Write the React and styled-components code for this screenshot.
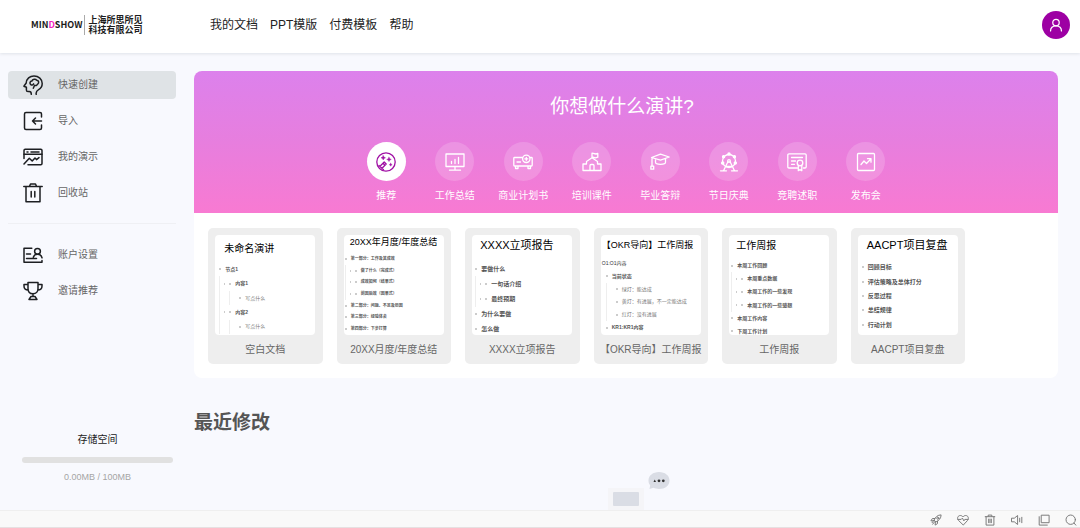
import React from "react";
import styled, { createGlobalStyle } from "styled-components";

const GlobalStyle = createGlobalStyle`
  *, *::before, *::after { box-sizing: border-box; }
  body {
    margin: 0;
    background: #f8f9fe;
    color: #222;
    font-family: "Liberation Sans", "Noto Sans CJK SC", sans-serif;
    font-size: 10px;
  }
  button { font: inherit; border: 0; padding: 0; background: none; cursor: pointer; }
  a { color: inherit; text-decoration: none; }
  ul { list-style: none; margin: 0; padding: 0; }
  h1, h2, h3, p { margin: 0; }
  svg { display: block; }
`;

/* ---------- page frame ---------- */

const Page = styled.div`
  position: relative;
  display: flex;
  flex-direction: column;
  min-height: 100vh;
`;

const Header = styled.header`
  display: flex;
  align-items: center;
  height: 53px;
  padding: 0 10px 4px 31px;
  background: #fff;
  box-shadow: 0 1px 3px #dfe2e8;
`;

const Logo = styled.a`
  display: flex;
  align-items: center;
  width: 179px;
  color: #1c1c1c;
  font-family: "Noto Sans CJK SC", sans-serif;
  font-weight: 700;
  font-size: 9px;
  line-height: 10px;
`;

const LogoAccent = styled.span`
  color: #f21fc0;
`;

const LogoCompany = styled.span`
  margin-left: 2px;
  padding-left: 3px;
  border-left: 1px solid #aaa;
`;

const TopNav = styled.nav`
  display: flex;
  gap: 12px;
  flex: 1;
  font-size: 12px;
  line-height: 18px;
  color: #222;
`;

const Avatar = styled.button`
  display: grid;
  place-items: center;
  width: 28px;
  height: 28px;
  border-radius: 50%;
  background: #9d00a3;
  color: #fff;
`;

const Body = styled.div`
  display: flex;
  flex: 1;
  gap: 18px;
  padding: 18px 22px 0 8px;
`;

/* ---------- sidebar ---------- */

const Sidebar = styled.aside`
  display: flex;
  flex-direction: column;
  flex: 0 0 168px;
`;

const SideList = styled.ul`
  display: flex;
  flex-direction: column;
  gap: 8px;
`;

const SideItem = styled.button`
  display: flex;
  align-items: center;
  gap: 15px;
  width: 100%;
  height: 28px;
  padding-left: 15px;
  border-radius: 4px;
  color: #666;
  line-height: 14px;
  background: ${(p) => (p.$active ? "#dfe3e6" : "transparent")};

  svg { color: #1d1f22; }
`;

const SideDivider = styled.hr`
  width: 100%;
  height: 1px;
  margin: 16px 0 17px;
  border: 0;
  background: #eff0f4;
`;

const Storage = styled.section`
  display: flex;
  flex-direction: column;
  align-items: center;
  margin: auto 3px 28px 14px;
`;

const StorageLabel = styled.label`
  color: #222;
  line-height: 14px;
`;

const StorageBar = styled.progress`
  appearance: none;
  width: 100%;
  height: 6px;
  margin: 10px 0 9px;
  border: 0;
  border-radius: 3px;
  overflow: hidden;
  background: #e1e1e1;

  &::-webkit-progress-bar { background: #e1e1e1; }
  &::-webkit-progress-value { background: #9d00a3; }
`;

const StorageText = styled.p`
  color: #a5a5a5;
  font-size: 9px;
  line-height: 10px;
`;

/* ---------- main column ---------- */

const Main = styled.main`
  flex: 1;
  min-width: 0;
`;

const Panel = styled.section`
  overflow: hidden;
  border-radius: 8px;
  background: #fff;
`;

const Hero = styled.div`
  display: flex;
  flex-direction: column;
  align-items: center;
  padding: 22px 0 10px;
  background: linear-gradient(#dc81ec, #e77ede 50%, #f87ad2);
  color: #fff;
`;

const HeroTitle = styled.h1`
  margin-bottom: 21px;
  padding-right: 8px;
  font-size: 19px;
  font-weight: 400;
  line-height: 28px;
`;

const Categories = styled.div`
  display: grid;
  grid-template-columns: repeat(8, 1fr);
  width: 548px;
  max-width: 100%;
`;

const Category = styled.button`
  display: flex;
  flex-direction: column;
  align-items: center;
  gap: 8px;
  color: #fff;
  line-height: 14px;
  white-space: nowrap;
`;

const CategoryDisc = styled.span`
  display: grid;
  place-items: center;
  width: 39px;
  height: 39px;
  border-radius: 50%;
  background: ${(p) => (p.$active ? "#fff" : "rgba(255, 255, 255, 0.17)")};
  color: ${(p) => (p.$active ? "#a010a4" : "#fff")};
`;

const Templates = styled.div`
  display: grid;
  grid-template-columns: repeat(6, 1fr);
  gap: 14px;
  max-width: 785px;
  padding: 15px 14px 14px;
`;

const Card = styled.button`
  display: flex;
  flex-direction: column;
  align-items: center;
  height: 136px;
  padding: 7px 0;
  border-radius: 5px;
  background: #eee;
  color: #666;
  white-space: nowrap;
`;

const CardCaption = styled.span`
  margin-top: 8px;
  line-height: 14px;
`;

const Preview = styled.span`
  display: block;
  width: 100px;
  height: 100px;
  padding-top: ${(p) => p.$top}px;
  border-radius: 4px;
  overflow: hidden;
  background: #fff;
  color: #333;
  text-align: left;
`;

const PreviewTitle = styled.span`
  display: block;
  margin-bottom: ${(p) => p.$gap}px;
  padding-left: ${(p) => p.$indent}px;
  font-size: ${(p) => p.$size}px;
  font-weight: 400;
  line-height: 14px;
  color: #000;
`;

const Outline = styled.span`
  display: flex;
  flex-direction: column;
  height: ${(p) => p.$height}px;
  padding-left: ${(p) => p.$indent}px;
  font-size: ${(p) => p.$size}px;
`;

const OutlineLine = styled.span`
  display: flex;
  flex: 1;
`;

const Rail = styled.span`
  display: flex;
  align-items: center;
  justify-content: center;
  width: 10px;
  align-self: stretch;
  border-left: 1px solid #eee;
`;

const FoldMark = styled.span`
  width: 1px;
  height: 2px;
  background: #ccc;
`;

const OutlineRow = styled.span`
  display: flex;
  flex: 1;
  align-items: center;
  line-height: 1;
  font-weight: ${(p) => (p.$level === 2 ? 400 : 700)};
  color: ${(p) => (p.$level === 2 ? "#777" : "#555")};

  &::before {
    content: "";
    flex: none;
    width: 2px;
    height: 2px;
    margin-right: 4px;
    border-radius: 50%;
    background: #bbb;
  }
`;

const PlainRow = styled.span`
  display: flex;
  align-items: center;
  line-height: 1;
  color: #333;
`;

const RootSpace = styled.span`
  width: 4px;
`;

const SectionTitle = styled.h2`
  margin-top: 31px;
  color: #555;
  font-size: 19px;
  font-weight: 700;
  line-height: 28px;
`;

/* ---------- bottom strip and floating helper ---------- */

const StatusBar = styled.footer`
  display: flex;
  align-items: center;
  justify-content: flex-end;
  gap: 15px;
  height: 18px;
  padding: 1px 3px 0 0;
  border-top: 1px solid #efefef;
  border-bottom: 1px solid #e6e0e1;
  background: #f9f9f9;
  color: #777;
`;

const StatusButton = styled.button`
  color: inherit;
`;

const Helper = styled.div`
  position: absolute;
  bottom: 18px;
  left: 56%;
  display: flex;
  align-items: flex-end;
  gap: 4px;
  margin-left: 3px;
`;

const HelperBox = styled.div`
  padding: 4px 5px;
  background: #f5f5f8;

  &::before {
    content: "";
    display: block;
    width: 26px;
    height: 14px;
    border-radius: 1px;
    background: #dadde5;
  }
`;

const HelperBubble = styled.button`
  margin-bottom: 20px;
`;

/* ---------- icons ---------- */

const Svg = ({ size = 20, box = 20, sw = 1.5, children }) => (
  <svg
    width={size}
    height={size}
    viewBox={`0 0 ${box} ${box}`}
    fill="none"
    stroke="currentColor"
    strokeWidth={sw}
    strokeLinecap="round"
    strokeLinejoin="round"
    aria-hidden="true"
  >
    {children}
  </svg>
);

const icons = {
  head: (
    <>
      <path d="M8.300 19.300C8.300 17.500 7.800 16.600 6.300 16.600H5Q3.400 16.600 3.400 15V12.200L.9 11.200 3.200 8C3.400 3.800 6.800.9 11 .9 15.600.9 19.200 4.200 19.200 8.400 19.200 11.600 17.600 13.500 15.600 14.600 13.600 15.700 12.800 17 13.200 19.300" />
      <path d="M8 9.800C6.200 8.600 6.900 6 8.900 6 9.500 3.900 12.600 3.500 13.600 5.200 15.800 5.300 16.400 8 14.700 9.100 14.200 10.500 12.500 10.800 11.600 10.300L10.300 13.300M8 9.800C9.200 10.400 10.200 9.800 10.600 8.900" />
    </>
  ),
  importIn: (
    <>
      <path d="M18.500 6V3Q18.500 1.500 17 1.500H3Q1.500 1.500 1.500 3V17Q1.500 18.500 3 18.500H17Q18.500 18.500 18.500 17V14" />
      <path d="M18.500 10H9.500M12.500 7 9.500 10 12.500 13" />
    </>
  ),
  slides: (
    <>
      <path d="M1 11.500V3.500Q1 2.300 2.200 2.300H17.800Q19 2.300 19 3.500V16.500Q19 17.700 17.800 17.700H5" />
      <path d="M1 7.300H19M4 4.900H5M8 4.900H16M1 17 6.300 11.200 9.200 14 12 11 13.500 12.600 16 10.600" />
    </>
  ),
  trash: (
    <path d="M.8 3.500H19.200M6.500 3.300 7.500 1H12.500L13.500 3.300M3 3.700V18.800H17V3.700M8.200 8.500V14M11.800 8.500V14" />
  ),
  account: (
    <>
      <path d="M8.800 3.200H1V17.300H19V15.500M3.500 13.500H13.500M3.500 8.900H7.500" />
      <circle cx="14.500" cy="6.300" r="2.900" />
      <path d="M10.300 12.200C11 10 12.600 9.300 14.500 9.300S18.300 10 19 12.800" />
    </>
  ),
  trophy: (
    <path d="M5 1.500H15V7.500C15 10.700 13.200 12.800 10 12.800S5 10.700 5 7.500ZM5 3.500H1V5C1 7.500 2.800 9 5.200 9M15 3.500H19V5C19 7.500 17.200 9 14.800 9M10 12.800V15.500M8 15.500H12L14 18.500H6Z" />
  ),
  spark: (
    <>
      <circle cx="10" cy="10" r="9.200" />
      <path d="M4 14.200 8.200 10 10.200 12 6 16.200M7 11.200 9 13.200M3 13.500 7.500 17.800" />
      <path d="M7.200 3.600 8 5.100 9.500 5.800 8 6.500 7.200 8 6.500 6.500 5 5.800 6.500 5.100ZM13 5.200 13.800 6.700 15.300 7.400 13.800 8.100 13 9.600 12.200 8.100 10.700 7.400 12.200 6.700ZM14.700 11.200 15.200 12.200 16.200 12.700 15.200 13.200 14.700 14.200 14.200 13.200 13.200 12.700 14.200 12.200Z" fill="currentColor" strokeWidth=".4" />
    </>
  ),
  board: <path d="M1 2H19V14.500H1ZM10 14.500V18M4.500 18.200H15.500M6.500 9.500V11.500M10 7.500V11.500M13.500 5.500V11.500" />,
  projector: (
    <>
      <path d="M9.500 5.500H1.500Q.8 5.500.8 6.200V13.300Q.8 14 1.500 14H18.500Q19.200 14 19.200 13.300V6.200Q19.200 5.500 18.500 5.500H17M2.500 14V16.500H5V14M15 14V16.500H17.500V14M4 10H7.500" />
      <circle cx="13.300" cy="6.800" r="3.700" />
      <path d="M13.300 5.300V8.300M11.800 6.800H14.800" />
    </>
  ),
  school: (
    <path d="M10 5.500V1.200L14 2 15.800 1.500V5.200L13.500 5.800 10 4.900M1 18.500V12H4.500V9.500L10 5.800 15.500 9.500V12H19V18.500ZM8 18.300V13.500Q8 12.500 9 12.500H11Q12 12.500 12 13.500V18.300M4.500 9.800V11.800M15.500 9.800V11.800" />
  ),
  grad: (
    <>
      <path d="M1.500 5.500 10.500 2.200 19.200 5 10.500 8.200ZM5.500 7.500V10.200C5.500 13 15.500 13 15.500 10.200V6.800M2 5.500V14" />
      <path d="M.9 14.200H3.700V17.200H.9Z" />
    </>
  ),
  wheel: (
    <>
      <circle cx="10" cy="9" r="6.500" />
      <path d="M9 9.500 4.500 18.800M11 9.500 15.500 18.800M1.500 18.800H7.500M12.500 18.800H18.500M7.500 14.500H12.500" />
      <circle cx="10" cy="9" r="1.300" />
      <g fill="currentColor">
        <circle cx="10" cy="2" r="1.100" />
        <circle cx="4.600" cy="4.700" r="1.100" />
        <circle cx="15.400" cy="4.700" r="1.100" />
        <circle cx="3.700" cy="11" r="1.100" />
        <circle cx="16.300" cy="11" r="1.100" />
      </g>
    </>
  ),
  certificate: (
    <>
      <path d="M10.500 16H2Q.8 16 .8 14.800V3Q.8 1.800 2 1.800H18Q19.200 1.800 19.200 3V14.800Q19.200 16 18 16H16.500M4.500 5.500H15.500M4.500 9H8.500M4.500 12.300H7.500" />
      <circle cx="13" cy="11" r="2.800" />
      <path d="M11.300 13.500V18.700L13 17.500 14.800 18.700V13.500" />
    </>
  ),
  launch: <path d="M2.500 1.500H17.500Q18.500 1.500 18.500 2.500V17.500Q18.500 18.500 17.500 18.500H2.500Q1.500 18.500 1.500 17.500V2.500Q1.500 1.500 2.500 1.500ZM5 12.500 8 9 10.500 11.500 14.800 7M11.500 6.700H15V10.200" />,
  user: (
    <>
      <circle cx="10" cy="6.500" r="4.600" />
      <path d="M2.200 18.500C2.200 14.500 5 11.100 10 11.100S17.800 14.500 17.800 18.500" />
    </>
  ),
  rocket: (
    <>
      <path d="M7 9.500C9 5 13 1.500 18.500 1.500 18.500 7 15 11 10.500 13ZM8 7.500H4L1.500 11.500 6 11M12.500 12V16L8.500 18.500 9 14M6.500 10.500 3.500 14.500M8 12.500 4.500 17" />
      <circle cx="13" cy="7" r="1.700" />
    </>
  ),
  pulse: (
    <path d="M10 18 2.300 10.500C-.8 6.500 2 2.500 5.500 2.500 7.800 2.500 9.200 3.800 10 5 10.800 3.800 12.200 2.500 14.500 2.500 18 2.500 20.800 6.500 17.700 10.500ZM1.500 9H7L9 6.800 11.500 11.500 13 9H18.500" />
  ),
  bin: <path d="M2 4.500H18M7 4V1.800H13V4M3.500 4.500V18.500H16.500V4.500M7.800 8.500V14.500M10 8.500V14.500M12.200 8.500V14.500" />,
  sound: <path d="M1.500 7H5.500L11 2.500V17.500L5.500 13H1.500ZM14.500 7V13M18 5.500V14.500" />,
  windows: <path d="M6 2H18.500V14.500H6ZM2 4.500V18.500H15.500" />,
  search: (
    <>
      <circle cx="9.500" cy="9.500" r="7.800" />
      <path d="M15.200 15.200 18 18.500" />
    </>
  ),
};

const Icon = ({ name, size, sw }) => (
  <Svg size={size} sw={sw}>
    {icons[name]}
  </Svg>
);

/* ---------- data ---------- */

const navLinks = ["我的文档", "PPT模版", "付费模板", "帮助"];

const primaryItems = [
  { icon: "head", label: "快速创建", active: true },
  { icon: "importIn", label: "导入" },
  { icon: "slides", label: "我的演示" },
  { icon: "trash", label: "回收站" },
];

const secondaryItems = [
  { icon: "account", label: "账户设置" },
  { icon: "trophy", label: "邀请推荐" },
];

const categories = [
  { icon: "spark", label: "推荐", active: true },
  { icon: "board", label: "工作总结" },
  { icon: "projector", label: "商业计划书" },
  { icon: "school", label: "培训课件" },
  { icon: "grad", label: "毕业答辩" },
  { icon: "wheel", label: "节日庆典" },
  { icon: "certificate", label: "竞聘述职" },
  { icon: "launch", label: "发布会" },
];

const templates = [
  {
    caption: "空白文档",
    title: "未命名演讲",
    titleSize: 10, titleIndent: 9, top: 7, gap: 6, height: 72, indent: 4, size: 5,
    rows: [[0, "节点1"], [1, "内容1"], [2, "写点什么"], [1, "内容2"], [2, "写点什么"]],
  },
  {
    caption: "20XX月度/年度总结",
    title: "20XX年月度/年度总结",
    titleSize: 9, titleIndent: 6, top: 0, gap: 4, height: 82, indent: 1, size: 4,
    rows: [
      [0, "第一部分：工作及其成效"],
      [1, "做了什么（完成式）"],
      [1, "成效如何（结果式）"],
      [1, "前因后效（因果式）"],
      [0, "第二部分：问题、不足及原因"],
      [0, "第三部分：经验体会"],
      [0, "第四部分：下步打算"],
    ],
  },
  {
    caption: "XXXX立项报告",
    title: "XXXX立项报告",
    titleSize: 11, titleIndent: 8, top: 3, gap: 9, height: 76, indent: 3, size: 6,
    rows: [[0, "要做什么"], [1, "一句话介绍"], [1, "最终预期"], [0, "为什么要做"], [0, "怎么做"]],
  },
  {
    caption: "【OKR导向】工作周报",
    title: "【OKR导向】工作周报",
    titleSize: 9, titleIndent: 1, top: 3, gap: 5, height: 77, flush: true, indent: 1, size: 5,
    rows: [
      [0, "O1:O1内容"],
      [1, "当前状态"],
      [2, "绿灯：能达成"],
      [2, "黄灯：有进展，不一定能达成"],
      [2, "红灯：没有进展"],
      [1, "KR1:KR1内容"],
    ],
  },
  {
    caption: "工作周报",
    title: "工作周报",
    titleSize: 10, titleIndent: 7, top: 4, gap: 6, height: 79, indent: 2, size: 5,
    rows: [
      [0, "本周工作回顾"],
      [1, "本周重点数据"],
      [1, "本周工作的一些发现"],
      [1, "本周工作的一些感想"],
      [0, "本周工作内容"],
      [0, "下周工作计划"],
    ],
  },
  {
    caption: "AACPT项目复盘",
    title: "AACPT项目复盘",
    titleSize: 11, titleIndent: 9, top: 3, gap: 8, height: 72, indent: 4, size: 6,
    rows: [[0, "回顾目标"], [0, "评估策略及总体打分"], [0, "反思过程"], [0, "总结规律"], [0, "行动计划"]],
  },
];

const statusItems = [
  ["rocket", "加速"],
  ["pulse", "健康"],
  ["bin", "清理"],
  ["sound", "声音"],
  ["windows", "窗口"],
  ["search", "搜索"],
];

/* ---------- composed parts ---------- */

function SideMenu({ items }) {
  return (
    <SideList>
      {items.map((item) => (
        <li key={item.label}>
          <SideItem $active={item.active}>
            <Icon name={item.icon} />
            {item.label}
          </SideItem>
        </li>
      ))}
    </SideList>
  );
}

function OutlineEntry({ level, text, flush }) {
  if (flush && level === 0) {
    return (
      <OutlineLine>
        <PlainRow>{text}</PlainRow>
      </OutlineLine>
    );
  }
  const rails = flush ? level - 1 : level;
  return (
    <OutlineLine>
      {flush && <RootSpace />}
      {Array.from({ length: rails }, (_, n) => (
        <Rail key={n}>{level === 1 && <FoldMark />}</Rail>
      ))}
      <OutlineRow $level={level}>{text}</OutlineRow>
    </OutlineLine>
  );
}

function TemplateCard({ t }) {
  return (
    <Card>
      <Preview $top={t.top}>
        <PreviewTitle $gap={t.gap} $indent={t.titleIndent} $size={t.titleSize}>
          {t.title}
        </PreviewTitle>
        <Outline $height={t.height} $indent={t.indent} $size={t.size}>
          {t.rows.map(([level, text], i) => (
            <OutlineEntry key={i} level={level} text={text} flush={t.flush} />
          ))}
        </Outline>
      </Preview>
      <CardCaption>{t.caption}</CardCaption>
    </Card>
  );
}

export default function App() {
  return (
    <Page>
      <GlobalStyle />
      <Header>
        <Logo href="#">
          <span>MIN<LogoAccent>D</LogoAccent>SHOW</span>
          <LogoCompany>
            上海所思所见
            <br />
            科技有限公司
          </LogoCompany>
        </Logo>
        <TopNav>
          {navLinks.map((label) => (
            <a key={label} href="#">{label}</a>
          ))}
        </TopNav>
        <Avatar aria-label="个人中心">
          <Icon name="user" size={14} sw={1.8} />
        </Avatar>
      </Header>

      <Body>
        <Sidebar>
          <SideMenu items={primaryItems} />
          <SideDivider />
          <SideMenu items={secondaryItems} />
          <Storage>
            <StorageLabel htmlFor="storage">存储空间</StorageLabel>
            <StorageBar id="storage" value={0} max={100} />
            <StorageText>0.00MB / 100MB</StorageText>
          </Storage>
        </Sidebar>

        <Main>
          <Panel>
            <Hero>
              <HeroTitle>你想做什么演讲?</HeroTitle>
              <Categories>
                {categories.map((c) => (
                  <Category key={c.label}>
                    <CategoryDisc $active={c.active}>
                      <Icon name={c.icon} sw={1.3} />
                    </CategoryDisc>
                    {c.label}
                  </Category>
                ))}
              </Categories>
            </Hero>
            <Templates>
              {templates.map((t) => (
                <TemplateCard key={t.caption} t={t} />
              ))}
            </Templates>
          </Panel>
          <SectionTitle>最近修改</SectionTitle>
        </Main>
      </Body>

      <StatusBar>
        {statusItems.map(([name, label]) => (
          <StatusButton key={name} aria-label={label}>
            <Icon name={name} size={12} sw={1.6} />
          </StatusButton>
        ))}
      </StatusBar>

      <Helper>
        <HelperBox />
        <HelperBubble aria-label="更多">
          <svg width="22" height="18" viewBox="0 0 22 18" aria-hidden="true">
            <path d="M11 0C17 0 21.500 3.500 21.500 8.500S17 17 11 17C9 17 7 16.500 5.500 15.800L1.500 17 2.200 13.200C1 12 .5 10.500.5 8.500.5 3.500 5 0 11 0Z" fill="#dadde5" />
            <path d="M5.500 10 6.700 7.500 8 10Z" fill="#333" />
            <circle cx="11" cy="8.800" r="1.400" fill="#333" />
            <circle cx="15.300" cy="8.800" r="1.400" fill="#333" />
          </svg>
        </HelperBubble>
      </Helper>
    </Page>
  );
}
